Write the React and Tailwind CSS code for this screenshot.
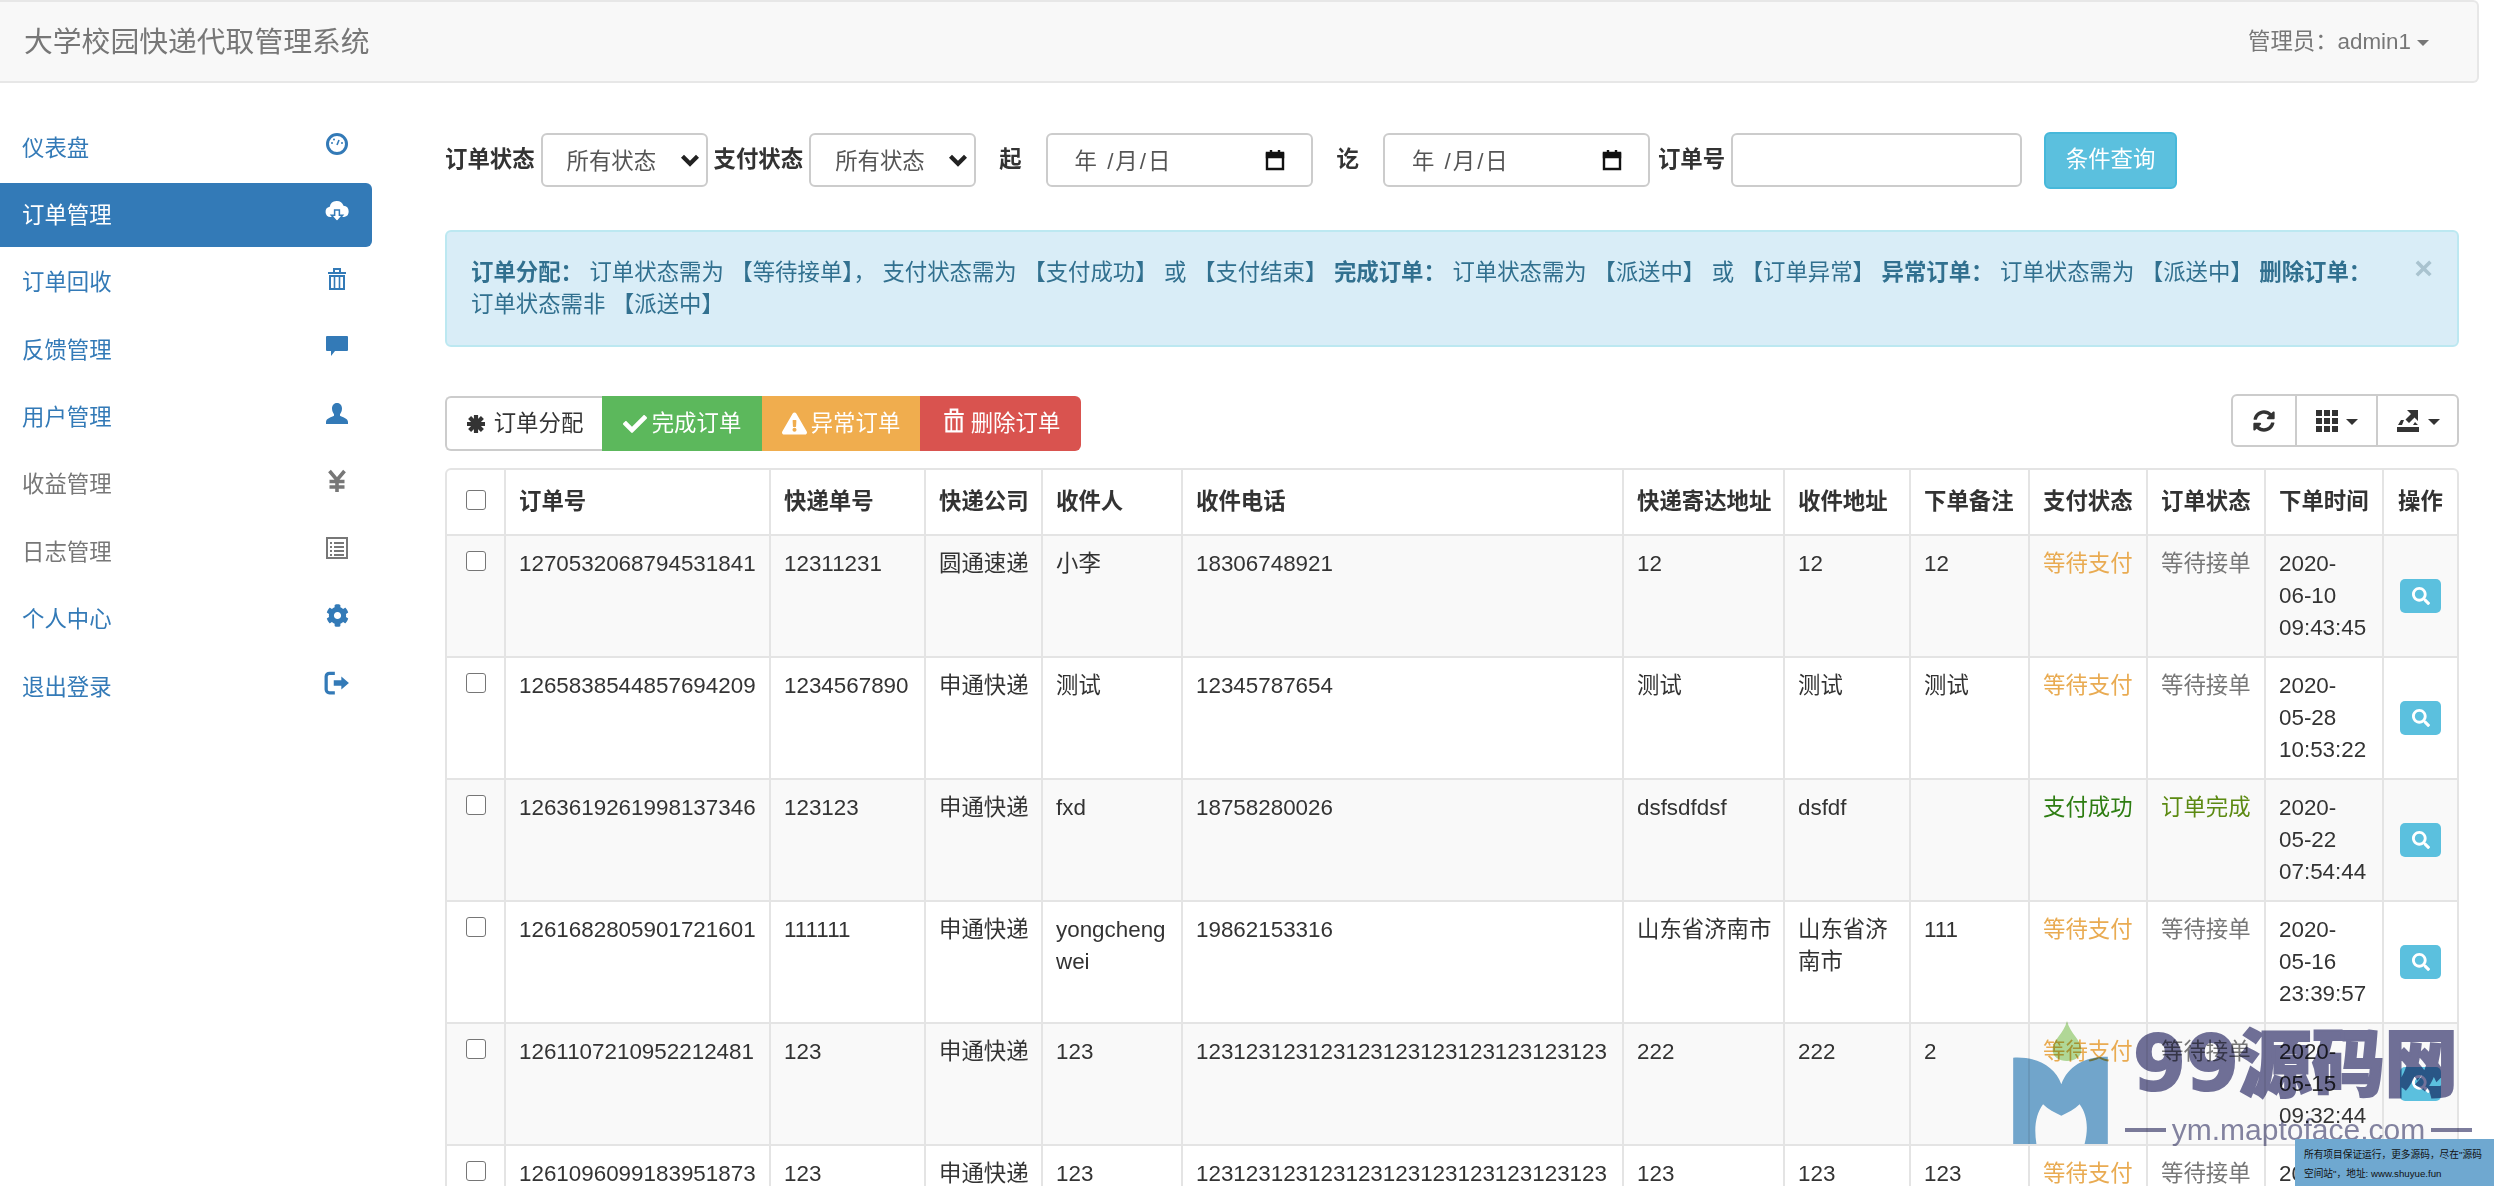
import React from 'react';
import { FaCog, FaCheck, FaExclamationTriangle, FaSearch, FaSyncAlt } from 'react-icons/fa';

const fontStack = 'font-["Liberation_Sans","Noto_Sans_CJK_SC",sans-serif]';

const DashboardIcon = () => (
  <svg viewBox="0 0 24 24" className="w-[24px] h-[24px]" fill="none">
    <circle cx="12" cy="12" r="9.5" stroke="currentColor" strokeWidth="3" />
    <path d="M12 13l2-5" stroke="currentColor" strokeWidth="1.6" />
    <circle cx="7" cy="11" r="1" fill="currentColor" />
    <circle cx="9" cy="7.5" r="1" fill="currentColor" />
    <circle cx="17" cy="11" r="1" fill="currentColor" />
  </svg>
);

const CloudIcon = () => (
  <svg viewBox="0 0 24 24" className="w-[26px] h-[26px]" fill="none">
    <path d="M6 17.5a4.8 4.8 0 0 1-.7-9.5A6.600 6.600 0 0 1 18 7.2a5.200 5.200 0 0 1 .5 10.300z" fill="#fff" />
    <path d="M9.800 11h4.400v5h3L12 22l-5.200-6h3z" fill="#fff" stroke="#337ab7" strokeWidth="1.400" />
  </svg>
);

const TrashIcon = ({ className }) => (
  <svg viewBox="0 0 24 24" className={className} fill="none" stroke="currentColor" strokeWidth="2">
    <path d="M3 6h18M9 5V2h6v3" />
    <path d="M5 9h14v13H5z" />
    <path d="M9.500 9v13M14.500 9v13" strokeWidth="1.600" />
  </svg>
);

const CommentIcon = () => (
  <svg viewBox="0 0 24 24" className="w-[24px] h-[24px]" fill="currentColor">
    <path d="M2 2h20a1 1 0 0 1 1 1v13a1 1 0 0 1-1 1H10l-4 5v-5H2a1 1 0 0 1-1-1V3a1 1 0 0 1 1-1z" />
  </svg>
);

const UserIcon = () => (
  <svg viewBox="0 0 24 24" className="w-[24px] h-[24px]" fill="currentColor">
    <path d="M12 1c3.300 0 5 2.600 5 5.600 0 2.200-1 4.400-2 5.600v1.600c2 1.400 8 2.400 8 6.200V22H1v-2c0-3.800 6-4.800 8-6.200v-1.600C8 11 7 8.800 7 6.600 7 3.600 8.700 1 12 1z" />
  </svg>
);

const YenIcon = () => (
  <svg viewBox="0 0 24 24" className="w-[24px] h-[24px]" fill="none" stroke="currentColor" strokeWidth="3.600">
    <path d="M4.500 2l7.500 9 7.500-9M12 11v12M4.500 12.500h15M4.500 18h15" />
  </svg>
);

const ListIcon = () => (
  <svg viewBox="0 0 24 24" className="w-[24px] h-[24px]" fill="none" stroke="currentColor">
    <path d="M2 2h20v20H2z" strokeWidth="2" />
    <path d="M5 7h2M9 7h10M5 11h2M9 11h10M5 15h2M9 15h10M5 19h2M9 19h10" strokeWidth="1.800" />
  </svg>
);

const LogoutIcon = () => (
  <svg viewBox="0 0 24 24" className="w-[26px] h-[26px]">
    <path d="M10 3H5a3 3 0 0 0-3 3v12a3 3 0 0 0 3 3h5" fill="none" stroke="currentColor" strokeWidth="3" />
    <path d="M9 9.500h7V6l7 6-7 6v-3.500H9z" fill="currentColor" />
  </svg>
);

const GridIcon = () => (
  <svg viewBox="0 0 22 22" className="w-[22px] h-[22px]" fill="currentColor">
    <path d="M0 0h6v6H0zM8 0h6v6H8zM16 0h6v6h-6zM0 8h6v6H0zM8 8h6v6H8zM16 8h6v6h-6zM0 16h6v6H0zM8 16h6v6H8zM16 16h6v6h-6z" />
  </svg>
);

const ExportIcon = () => (
  <svg viewBox="0 0 24 24" className="w-[24px] h-[24px]" fill="currentColor">
    <path d="M1 18h22v5H1z" />
    <path d="M5 11h3l-2 5H2zM19 13l3 3h-5z" />
    <path d="M11 1h11v11l-3.500-3.500L13 14l-3.500-3.500L15 5z" />
  </svg>
);

const AsteriskIcon = () => (
  <svg viewBox="0 0 20 20" className="w-[20px] h-[20px]" fill="none" stroke="currentColor" strokeWidth="4.200">
    <path d="M10 1v18M1 10h18M3.600 3.600l12.800 12.800M16.400 3.600L3.600 16.400" />
  </svg>
);

const Caret = () => (
  <span className="w-0 h-0 mt-[3px] border-x-[6px] border-t-[6px] border-x-transparent border-t-current" />
);

const navItems = [
  { label: '仪表盘', icon: <DashboardIcon /> },
  { label: '订单管理', icon: <CloudIcon />, active: true },
  { label: '订单回收', icon: <TrashIcon className="w-[24px] h-[24px]" /> },
  { label: '反馈管理', icon: <CommentIcon /> },
  { label: '用户管理', icon: <UserIcon /> },
  { label: '收益管理', icon: <YenIcon />, muted: true },
  { label: '日志管理', icon: <ListIcon />, muted: true },
  { label: '个人中心', icon: <FaCog className="w-[23px] h-[23px]" /> },
  { label: '退出登录', icon: <LogoutIcon /> },
];

const phoneLong = '123123123123123123123123123123123';

const rows = [
  ['1270532068794531841', '12311231', '圆通速递', '小李', '18306748921', '12', '12', '12', 'wait', 'wait', ['2020-', '06-10', '09:43:45']],
  ['1265838544857694209', '1234567890', '申通快递', '测试', '12345787654', '测试', '测试', '测试', 'wait', 'wait', ['2020-', '05-28', '10:53:22']],
  ['1263619261998137346', '123123', '申通快递', 'fxd', '18758280026', 'dsfsdfdsf', 'dsfdf', '', 'paid', 'done', ['2020-', '05-22', '07:54:44']],
  ['1261682805901721601', '111111', '申通快递', 'yongchengwei', '19862153316', '山东省济南市', '山东省济南市', '111', 'wait', 'wait', ['2020-', '05-16', '23:39:57']],
  ['1261107210952212481', '123', '申通快递', '123', phoneLong, '222', '222', '2', 'wait', 'wait', ['2020-', '05-15', '09:32:44']],
  ['1261096099183951873', '123', '申通快递', '123', phoneLong, '123', '123', '123', 'wait', 'wait', ['2020-', '05-15', '08:48:35']],
];

const headers = ['订单号', '快递单号', '快递公司', '收件人', '收件电话', '快递寄达地址', '收件地址', '下单备注', '支付状态', '订单状态', '下单时间'];

const thClass = 'border-l-2 border-[#e4e4e4] pl-[13px] pr-[8px] text-left font-bold align-middle';
const tdClass = 'border-l-2 border-t-2 border-[#e4e4e4] pl-[13px] pr-[8px] py-[12px] align-top break-all';

function SelectBox() {
  return (
    <div className="w-[167px] h-[54px] shrink-0 flex items-center justify-between pl-[24px] pr-[6px] bg-white border-2 border-[#ccc] rounded-[6px] text-[#555]">
      <span className="pt-[3px]">所有状态</span>
      <svg viewBox="0 0 16 16" className="w-[20px] h-[20px]" fill="none" stroke="#222" strokeWidth="3.400">
        <path d="M2 5l6 6 6-6" />
      </svg>
    </div>
  );
}

function DateBox() {
  return (
    <div className="w-[267px] h-[54px] shrink-0 flex items-center justify-between pl-[27px] pr-[26px] bg-white border-2 border-[#ccc] rounded-[6px] text-[#555]">
      <span className="pt-[4px] tracking-[2px]">年 /月/日</span>
      <svg viewBox="0 0 20 22" className="w-[20px] h-[22px]" fill="none" stroke="#111" strokeWidth="2.400">
        <path d="M2 5h16v15H2z" />
        <path d="M2 4h16v4H2z" fill="#111" />
        <path d="M6 1v3M14 1v3" />
      </svg>
    </div>
  );
}

export default function App() {
  return (
    <div className={`relative w-[2504px] h-[1186px] overflow-hidden bg-white text-[22.4px] leading-[32px] text-[#333] ${fontStack}`}>
      <header className="h-[83px] mr-[25px] flex items-center justify-between pl-[24px] pr-[48px] bg-[#f8f8f8] border-2 border-l-0 border-[#e7e7e7] rounded-r-[6px] text-[#777]">
        <span className="text-[28.800px]">大学校园快递代取管理系统</span>
        <span className="flex items-center gap-[6px]">
          管理员：admin1
          <Caret />
        </span>
      </header>

      <div className="flex">
        <aside className="w-[372px] shrink-0 pt-[33px]">
          {navItems.map((item) => (
            <div
              key={item.label}
              className={`h-[64px] mb-[3.400px] flex items-center justify-between pl-[22px] pr-[22px] rounded-r-[6px] ${
                item.active ? 'bg-[#337ab7] text-white' : item.muted ? 'text-[#777]' : 'text-[#337ab7]'
              }`}
            >
              <span className="pt-[1px]">{item.label}</span>
              <span className="w-[26px] flex justify-center -mt-[8px]">{item.icon}</span>
            </div>
          ))}
        </aside>

        <main className="flex-1 pl-[73px] pr-[49px] pt-[50px]">
          <div className="flex items-center h-[54px]">
            <b className="mr-[6px] -mt-[1px]">订单状态</b>
            <SelectBox />
            <b className="mx-[6px] -mt-[1px]">支付状态</b>
            <SelectBox />
            <b className="ml-[23px] mr-[24px] -mt-[1px]">起</b>
            <DateBox />
            <b className="mx-[24px] -mt-[1px]">讫</b>
            <DateBox />
            <b className="ml-[8px] mr-[6px] -mt-[1px]">订单号</b>
            <div className="w-[291px] h-[54px] bg-white border-2 border-[#ccc] rounded-[6px]" />
            <button className="ml-[22px] w-[133px] h-[57px] bg-[#5bc0de] border-2 border-[#46b8da] rounded-[6px] text-white">条件查询</button>
          </div>

          <div className="relative mt-[43px] h-[117px] pt-[25px] pl-[24px] pr-[56px] bg-[#d9edf7] border-2 border-[#bce8f1] rounded-[6px] text-[#31708f] [word-spacing:0.3px]">
            <b>订单分配：</b> 订单状态需为 【等待接单】， 支付状态需为 【支付成功】 或 【支付结束】 <b>完成订单：</b> 订单状态需为 【派送中】 或 【订单异常】 <b>异常订单：</b> 订单状态需为 【派送中】 <b>删除订单：</b>
            <br />
            订单状态需非 【派送中】
            <span className="absolute right-[24px] top-[20px] text-[32px] font-bold text-[#a9c3cf]">×</span>
          </div>

          <div className="mt-[49px] flex items-start justify-between h-[56px]">
            <div className="flex h-[55px] text-white">
              <button className="w-[157px] flex items-center justify-center gap-[8px] bg-white border-2 border-r-0 border-[#ccc] rounded-l-[6px] text-[#333]">
                <AsteriskIcon />
                订单分配
              </button>
              <button className="w-[160px] flex items-center justify-center gap-[5px] bg-[#5cb85c]">
                <FaCheck className="w-[24px] h-[24px]" />
                完成订单
              </button>
              <button className="w-[158px] flex items-center justify-center gap-[4px] bg-[#f0ad4e]">
                <FaExclamationTriangle className="w-[25px] h-[25px]" />
                异常订单
              </button>
              <button className="w-[161px] flex items-center justify-center gap-[4px] bg-[#d9534f] rounded-r-[6px]">
                <TrashIcon className="w-[26px] h-[31px] -mt-[6px]" />
                删除订单
              </button>
            </div>
            <div className="flex h-[53px] -mt-[2px] bg-white border-2 border-[#ccc] rounded-[6px] text-[#333]">
              <div className="w-[62px] flex items-center justify-center">
                <FaSyncAlt className="w-[22px] h-[22px]" />
              </div>
              <div className="w-[81px] flex items-center justify-center gap-[8px] border-l-2 border-[#ccc]">
                <GridIcon />
                <Caret />
              </div>
              <div className="w-[81px] flex items-center justify-center gap-[8px] border-l-2 border-[#ccc]">
                <ExportIcon />
                <Caret />
              </div>
            </div>
          </div>

          <div className="mt-[16px] border-2 border-[#e4e4e4] rounded-[6px]">
            <table className="w-full table-fixed border-collapse">
              <colgroup>
                <col className="w-[58px]" />
                <col className="w-[265px]" />
                <col className="w-[155px]" />
                <col className="w-[117px]" />
                <col className="w-[140px]" />
                <col className="w-[441px]" />
                <col className="w-[161px]" />
                <col className="w-[126px]" />
                <col className="w-[119px]" />
                <col className="w-[118px]" />
                <col className="w-[118px]" />
                <col className="w-[118px]" />
                <col className="w-[74px]" />
              </colgroup>
              <thead>
                <tr className="h-[65px]">
                  <th className="text-center align-middle">
                    <input type="checkbox" className="appearance-none block mx-auto -mt-[4px] w-[20px] h-[20px] bg-white border-[1.500px] border-[#767676] rounded-[3px]" />
                  </th>
                  {headers.map((h) => (
                    <th key={h} className={thClass}>{h}</th>
                  ))}
                  <th className="border-l-2 border-[#e4e4e4] text-center font-bold align-middle">操作</th>
                </tr>
              </thead>
              <tbody>
                {rows.map((row, i) => (
                  <tr key={row[0]} className={`h-[122px] ${i % 2 === 0 ? 'bg-[#f9f9f9]' : 'bg-white'}`}>
                    <td className="border-t-2 border-[#e4e4e4] align-top pt-[15px]">
                      <input type="checkbox" className="appearance-none block mx-auto w-[20px] h-[20px] bg-white border-[1.500px] border-[#767676] rounded-[3px]" />
                    </td>
                    {row.slice(0, 8).map((v, j) => (
                      <td key={j} className={tdClass}>{v}</td>
                    ))}
                    <td className={`${tdClass} ${row[8] === 'paid' ? 'text-[#2e7d12]' : 'text-[#e9ab52]'}`}>
                      {row[8] === 'paid' ? '支付成功' : '等待支付'}
                    </td>
                    <td className={`${tdClass} ${row[9] === 'done' ? 'text-[#5c8a12]' : 'text-[#777]'}`}>
                      {row[9] === 'done' ? '订单完成' : '等待接单'}
                    </td>
                    <td className={tdClass}>
                      {row[10].map((line) => (
                        <div key={line}>{line}</div>
                      ))}
                    </td>
                    <td className="border-l-2 border-t-2 border-[#e4e4e4] text-center align-middle">
                      <button className="inline-flex items-center justify-center w-[41px] h-[34px] bg-[#5bc0de] rounded-[5px] text-white">
                        <FaSearch className="w-[18px] h-[18px]" />
                      </button>
                    </td>
                  </tr>
                ))}
              </tbody>
            </table>
          </div>
        </main>
      </div>

      {/* watermark over the table */}
      <svg viewBox="0 0 40 50" className="absolute left-[2051px] top-[1016px] w-[32px] h-[50px] mix-blend-multiply">
        <path d="M20 0C24 16 38 24 38 36C38 45 30 50 20 50C10 50 2 45 2 36C2 24 16 16 20 0Z" fill="#b4dd9a" />
      </svg>
      <svg viewBox="0 -5 285 265" className="absolute left-[2013px] top-[1056px] w-[95px] h-[88px] mix-blend-multiply">
        <path d="M0 0C70 -4 125 25 145 80C165 25 215 -4 285 -3V260H215C228 210 222 170 200 140C185 155 165 165 145 175C125 165 105 155 90 140C68 170 62 210 70 260H0Z" fill="#74a9d0" />
      </svg>
      <div className="absolute left-[2133px] top-[1022px] flex items-center h-[84px] font-bold text-[#72729a] leading-none mix-blend-multiply [-webkit-text-stroke:2px_#72729a]">
        <span className='text-[76px] font-["DejaVu_Sans"]'>99</span>
        <span className="text-[73px] font-black">源码网</span>
      </div>
      <div className="absolute left-[2125px] top-[1110px] w-[347px] h-[40px] flex items-center justify-between text-[#8585a3] text-[30px] leading-[40px] mix-blend-multiply">
        <span className="w-[41px] h-[4px] bg-[#7d7d9d]" />
        ym.maptoface.com
        <span className="w-[41px] h-[4px] bg-[#7d7d9d]" />
      </div>
      <div className="absolute left-[2295px] top-[1139px] w-[199px] h-[47px] pl-[9px] pt-[6px] bg-[#6fa8d0] text-[#111] text-[9.700px] leading-[19px] whitespace-nowrap">
        所有项目保证运行，更多源码，尽在"源码
        <br />
        空间站"，地址: www.shuyue.fun
      </div>
    </div>
  );
}
